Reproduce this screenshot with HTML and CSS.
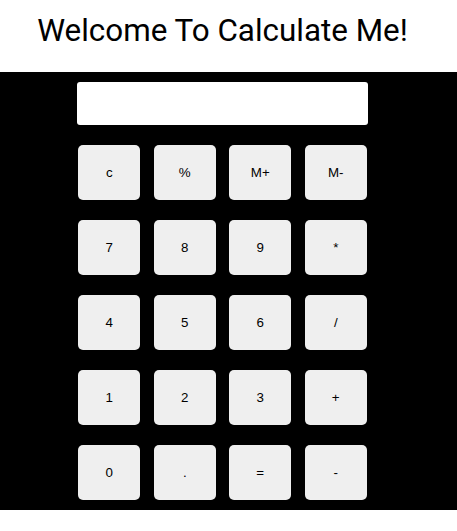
FILE: index.html
```html
<!DOCTYPE html>
<html>
<head>
<meta charset="utf-8">
<link rel="stylesheet" href="styles.css">
</head>
<body>
<header class="header">
  <h1 class="title">Welcome To Calculate Me!</h1>
</header>
<main class="calc">
  <input class="display" type="text">
  <div class="keys">
    <button class="key">c</button>
    <button class="key">%</button>
    <button class="key">M+</button>
    <button class="key">M-</button>
    <button class="key">7</button>
    <button class="key">8</button>
    <button class="key">9</button>
    <button class="key">*</button>
    <button class="key">4</button>
    <button class="key">5</button>
    <button class="key">6</button>
    <button class="key">/</button>
    <button class="key">1</button>
    <button class="key">2</button>
    <button class="key">3</button>
    <button class="key">+</button>
    <button class="key">0</button>
    <button class="key">.</button>
    <button class="key">=</button>
    <button class="key">-</button>
  </div>
</main>
</body>
</html>
```
FILE: styles.css
```css
html, body {
  margin: 0;
  padding: 0;
  background: #fff;
}
.header {
  height: 72px;
  width: 445px;
  display: flex;
  justify-content: center;
}
.title {
  margin: 0;
  padding-top: 12px;
  font-family: Roboto, sans-serif;
  font-weight: 400;
  font-size: 31.4px;
  line-height: 38px;
  color: #000;
}
.calc {
  background: #000;
  padding: 10px 12px 10px 0;
  display: flex;
  flex-direction: column;
  align-items: center;
  gap: 20px;
}
.display {
  width: 291px;
  height: 43px;
  box-sizing: border-box;
  border: none;
  border-radius: 3px;
  background: #fff;
  margin: 0;
  padding: 0;
}
.keys {
  display: grid;
  grid-template-columns: repeat(4, 62px);
  grid-auto-rows: 55px;
  column-gap: 13.5px;
  row-gap: 20px;
}
.key {
  background: #efefef;
  border: none;
  border-radius: 5px;
  font-family: "Liberation Sans", Arial, sans-serif;
  font-size: 13.33px;
  color: #000;
  padding: 0;
  margin: 0;
}
```
